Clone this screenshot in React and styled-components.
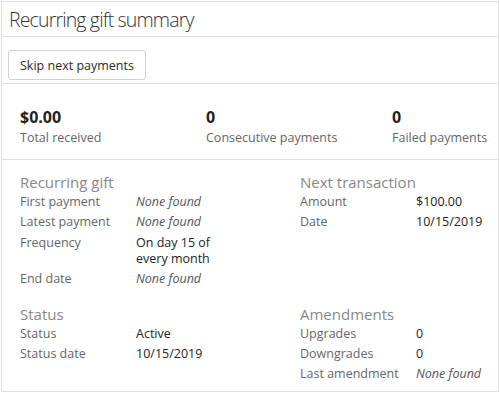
import React from "react";
import styled, { createGlobalStyle } from "styled-components";

const GlobalStyle = createGlobalStyle`
  html, body {
    margin: 0;
    padding: 0;
    background: #ffffff;
  }
  body {
    font-family: "Open Sans", "Liberation Sans", sans-serif;
    color: #333;
  }
`;

const Panel = styled.div`
  box-sizing: border-box;
  margin: 1px 0 0 1px;
  width: 498px;
  height: 391px;
  border: 1px solid #e0e0e0;
  display: flex;
  flex-direction: column;
  overflow: hidden;

  & > * {
    flex-shrink: 0;
  }
`;

const Header = styled.div`
  height: 34px;
  border-bottom: 1px solid #e0e0e0;
  display: flex;
  align-items: center;
  padding-left: 7px;
`;

const Title = styled.h2`
  margin: 0;
  font-size: 19.5px;
  font-weight: 300;
  color: #333;
  letter-spacing: -0.85px;
`;

const Toolbar = styled.div`
  box-sizing: border-box;
  height: 46px;
  display: flex;
  align-items: flex-start;
  padding: 13px 0 0 6px;
`;

const Button = styled.button`
  box-sizing: border-box;
  height: 30px;
  padding: 0 11px;
  border: 1px solid #d0d0d0;
  border-radius: 3px;
  background: #fff;
  font-family: inherit;
  font-size: 12.5px;
  color: #2a2a2a;
`;

const Stats = styled.div`
  box-sizing: content-box;
  border-top: 1px solid #e0e0e0;
  border-bottom: 1px solid #e0e0e0;
  height: 52px;
  display: grid;
  grid-template-columns: 186px 186px 1fr;
  align-content: start;
  padding: 23px 0 0 18px;
`;

const Stat = styled.div`
  display: flex;
  flex-direction: column;
`;

const StatValue = styled.div`
  font-size: 16px;
  font-weight: 700;
  color: #222;
  line-height: 20px;
`;

const StatLabel = styled.div`
  margin-top: 2px;
  font-size: 12.5px;
  color: #666;
  line-height: 18px;
`;

const Details = styled.div`
  display: grid;
  grid-template-columns: 280px 1fr;
  row-gap: 15px;
  padding: 13px 0 0 18px;
`;

const Section = styled.div`
  display: flex;
  flex-direction: column;
`;

const SectionTitle = styled.h3`
  margin: 0 0 1px;
  font-size: 15px;
  font-weight: 400;
  color: #888;
  line-height: 18px;
`;

const Row = styled.div`
  display: grid;
  grid-template-columns: 116px 1fr;
  font-size: 12.5px;
  line-height: 16px;
  padding: 2px 0 2.4px;
`;

const Label = styled.span`
  color: #666;
`;

const Value = styled.span`
  color: ${(p) => (p.$empty ? "#555" : "#222")};
  font-style: ${(p) => (p.$empty ? "italic" : "normal")};
`;

const NONE = "None found";

const sections = [
  {
    title: "Recurring gift",
    rows: [
      ["First payment", NONE],
      ["Latest payment", NONE],
      ["Frequency", "On day 15 of\nevery month"],
      ["End date", NONE],
    ],
  },
  {
    title: "Next transaction",
    rows: [
      ["Amount", "$100.00"],
      ["Date", "10/15/2019"],
    ],
  },
  {
    title: "Status",
    rows: [
      ["Status", "Active"],
      ["Status date", "10/15/2019"],
    ],
  },
  {
    title: "Amendments",
    rows: [
      ["Upgrades", "0"],
      ["Downgrades", "0"],
      ["Last amendment", NONE],
    ],
  },
];

export default function App() {
  return (
    <>
      <GlobalStyle />
      <Panel>
        <Header>
          <Title>Recurring gift summary</Title>
        </Header>
        <Toolbar>
          <Button>Skip next payments</Button>
        </Toolbar>
        <Stats>
          <Stat>
            <StatValue>$0.00</StatValue>
            <StatLabel>Total received</StatLabel>
          </Stat>
          <Stat>
            <StatValue>0</StatValue>
            <StatLabel>Consecutive payments</StatLabel>
          </Stat>
          <Stat>
            <StatValue>0</StatValue>
            <StatLabel>Failed payments</StatLabel>
          </Stat>
        </Stats>
        <Details>
          {sections.map((s) => (
            <Section key={s.title}>
              <SectionTitle>{s.title}</SectionTitle>
              {s.rows.map(([label, value]) => (
                <Row key={label}>
                  <Label>{label}</Label>
                  <Value $empty={value === NONE}>
                    {value.split("\n").map((line) => (
                      <div key={line}>{line}</div>
                    ))}
                  </Value>
                </Row>
              ))}
            </Section>
          ))}
        </Details>
      </Panel>
    </>
  );
}
